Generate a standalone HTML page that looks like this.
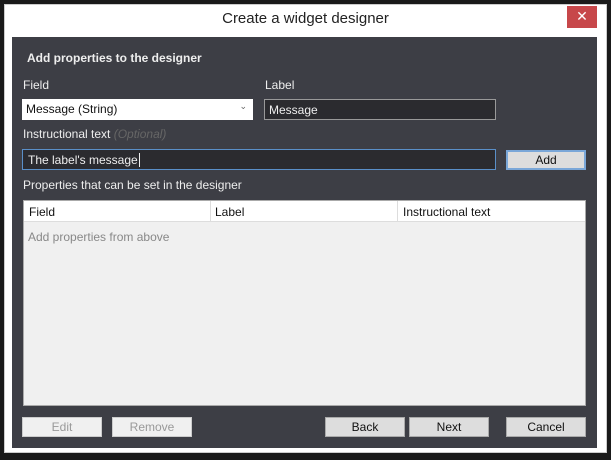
<!DOCTYPE html>
<html><head><style>
*{box-sizing:border-box;margin:0;padding:0}
body{width:611px;height:460px;background:#1a1a1a;font-family:"Liberation Sans",sans-serif;font-size:12px;position:relative;overflow:hidden}
.a{position:absolute}
.win{left:4px;top:4px;width:603px;height:449px;background:#fff;border:1px solid #ccc}
.title{left:0;top:10px;width:611px;text-align:center;font-size:15px;color:#222}
.close{left:567px;top:6px;width:30px;height:22px;background:#c7474a;color:#fff;text-align:center;font-size:14px;line-height:21px}
.panel{left:12px;top:37px;width:585px;height:411px;background:#3d3e45}
.lbl{color:#eee}
.btn{background:#ddd;border:1px solid #aaa;text-align:center;line-height:18px;color:#111;height:20px}
.dis{background:#f0f0f0;color:#999;border:1px solid #ccc}
</style></head><body>
<div class="a win"></div>
<div class="a title">Create a widget designer</div>
<div class="a close">✕</div>
<div class="a panel"></div>
<div class="a lbl" style="left:27px;top:51px;font-weight:bold">Add properties to the designer</div>
<div class="a lbl" style="left:23px;top:78px">Field</div>
<div class="a lbl" style="left:265px;top:78px">Label</div>
<div class="a" style="left:22px;top:99px;width:231px;height:21px;background:#fff;padding:3px 4px;color:#111">Message (String)<span style="position:absolute;right:6px;top:2px;font-size:9px;color:#666">⌄</span></div>
<div class="a" style="left:264px;top:99px;width:232px;height:21px;background:#2b2b2f;border:1px solid #999;padding:3px 4px;color:#eee">Message</div>
<div class="a lbl" style="left:23px;top:127px">Instructional text <i style="color:#666">(Optional)</i></div>
<div class="a" style="left:22px;top:149px;width:474px;height:21px;background:#2b2b2f;border:1px solid #5a8fc8;padding:3px 5px;color:#eee">The label's message<span style="border-left:1px solid #eee;margin-left:1px"></span></div>
<div class="a btn" style="left:506px;top:150px;width:80px;border-color:#7aa7d8;border-width:2px;line-height:16px">Add</div>
<div class="a lbl" style="left:23px;top:178px">Properties that can be set in the designer</div>
<div class="a" style="left:23px;top:200px;width:563px;height:206px;background:#f0f0f0;border:1px solid #aaa"></div>
<div class="a" style="left:24px;top:201px;width:561px;height:21px;background:#fff;border-bottom:1px solid #ddd"></div>
<div class="a" style="left:210px;top:201px;width:1px;height:21px;background:#ddd"></div>
<div class="a" style="left:397px;top:201px;width:1px;height:21px;background:#ddd"></div>
<div class="a" style="left:29px;top:205px;color:#111">Field</div>
<div class="a" style="left:215px;top:205px;color:#111">Label</div>
<div class="a" style="left:403px;top:205px;color:#111">Instructional text</div>
<div class="a" style="left:28px;top:230px;color:#888">Add properties from above</div>
<div class="a btn dis" style="left:22px;top:417px;width:80px">Edit</div>
<div class="a btn dis" style="left:112px;top:417px;width:80px">Remove</div>
<div class="a btn" style="left:325px;top:417px;width:80px">Back</div>
<div class="a btn" style="left:409px;top:417px;width:80px">Next</div>
<div class="a btn" style="left:506px;top:417px;width:80px">Cancel</div>
</body></html>
